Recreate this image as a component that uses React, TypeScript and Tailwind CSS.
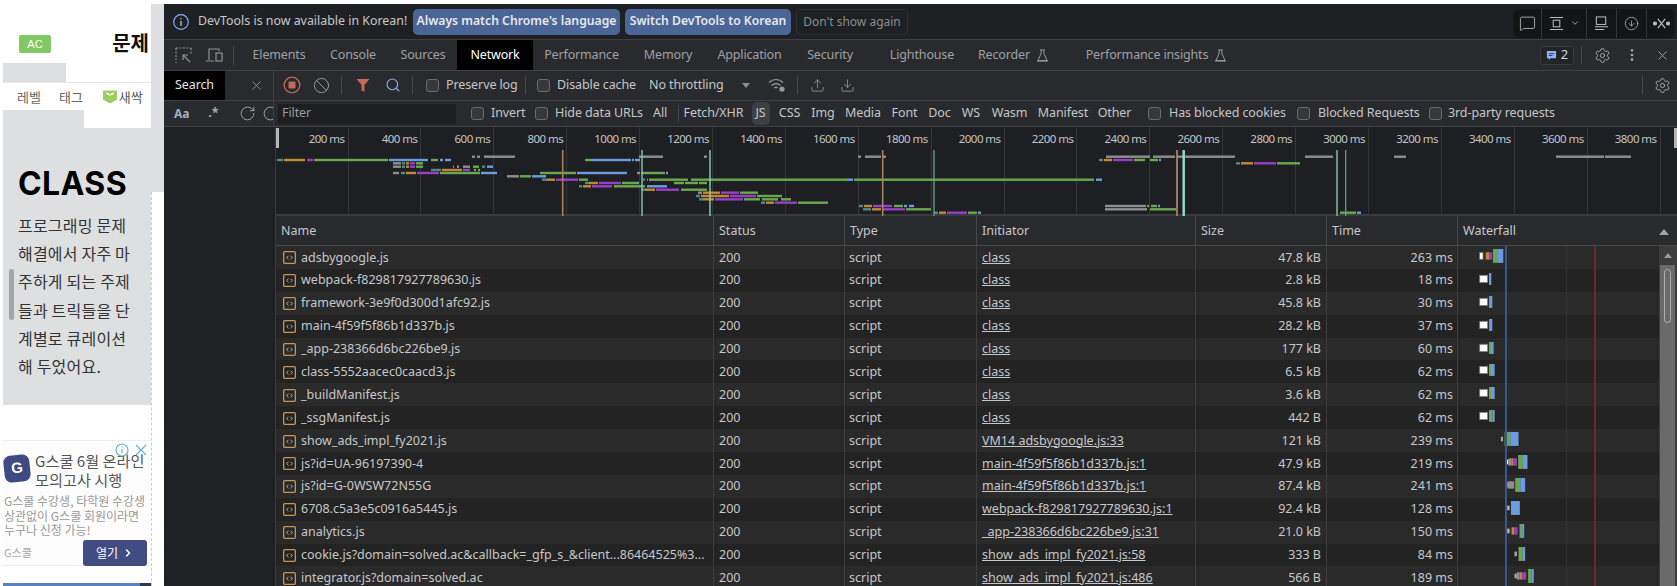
import {
  ChevronDown,
  ChevronRight,
  CircleArrowDown,
  Ban,
  Download,
  EllipsisVertical,
  MessageSquare,
  RotateCw,
  Search,
  Settings,
  Upload,
  X,
} from "lucide-react";

const ui = "font-['Noto_Sans','Noto_Sans_CJK_KR',sans-serif]";

type Seg = [number, number, string];

const c = {
  t: "#4f8c84",
  o: "#c08a35",
  p: "#9a3fc4",
  g: "#69a84f",
  b: "#6c9be0",
  a: "#8f8f8f",
};

// overview bars, [y, [x1, x2, colour]...] in page px
const overview: [number, Seg[]][] = [
  [155.7, [[472, 475, c.a], [477, 480, c.a], [484, 515, c.a], [639, 663, c.a], [704, 707, c.a], [858, 861, c.a], [865, 881, c.a], [883, 886, c.a], [1106, 1150, c.a], [1153, 1175, c.a], [1177, 1235, c.a], [1305, 1333, c.a], [1394, 1406, c.a], [1556, 1604, c.a], [1605, 1631, c.a]]],
  [159, [[277, 283, c.t], [284, 305, c.o], [307, 313, c.p], [314, 388, c.g], [389, 428, c.b], [431, 438, c.g], [440, 443, c.b], [445, 451, c.b], [585, 592, c.g], [592, 631, c.b], [632, 634, c.b], [635, 640, c.b], [1099, 1103, c.t], [1104, 1112, c.o], [1113, 1133, c.p], [1134, 1145, c.g], [1150, 1158, c.g], [1159, 1161, c.b]]],
  [162.3, [[393, 401, c.a], [402, 405, c.t], [406, 409, c.o], [410, 415, c.p], [416, 423, c.g], [1236, 1240, c.t], [1241, 1253, c.o], [1254, 1276, c.p], [1277, 1300, c.g]]],
  [165.7, [[393, 401, c.a], [402, 405, c.t], [406, 409, c.o], [410, 415, c.p], [416, 423, c.g], [453, 454, c.a], [457, 459, c.a], [463, 470, c.a], [473, 479, c.g], [482, 485, c.t], [487, 493, c.b]]],
  [169, [[431, 441, c.t], [442, 462, c.o], [463, 470, c.p], [474, 476, c.g], [478, 480, c.g]]],
  [172, [[393, 399, c.a], [401, 405, c.t], [406, 416, c.o], [417, 439, c.p], [440, 480, c.g], [481, 497, c.b], [540, 576, c.g], [577, 627, c.b], [637, 640, c.a], [641, 665, c.g], [666, 668, c.b]]],
  [175.3, [[507, 519, c.a], [520, 531, c.g], [532, 546, c.b]]],
  [178.7, [[542, 547, c.t], [547, 555, c.o], [556, 578, c.p], [579, 588, c.g], [643, 645, c.t], [647, 648, c.g], [649, 688, c.g], [691, 847, c.g], [847, 853, c.b], [854, 1094, c.g], [1096, 1102, c.b]]],
  [182, [[585, 589, c.t], [589, 598, c.o], [599, 621, c.p], [622, 637, c.g], [637, 639, c.b], [674, 684, c.g], [685, 698, c.g], [699, 707, c.g]]],
  [185.3, [[579, 582, c.t], [583, 591, c.o], [592, 612, c.p], [614, 645, c.g], [647, 667, c.b]]],
  [188.7, [[641, 645, c.t], [645, 655, c.o], [656, 679, c.p], [681, 707, c.g]]],
  [191.7, [[698, 702, c.a], [703, 720, c.o], [721, 739, c.p], [740, 758, c.g]]],
  [195, [[696, 700, c.t], [701, 729, c.o], [730, 756, c.p], [757, 782, c.g]]],
  [198.3, [[699, 703, c.t], [703, 714, c.o], [715, 743, c.p], [744, 760, c.g], [762, 778, c.g], [781, 791, c.g]]],
  [201.7, [[761, 765, c.t], [766, 774, c.o], [775, 797, c.p], [798, 828, c.g]]],
  [205, [[859, 863, c.t], [864, 872, c.o], [873, 892, c.p], [894, 903, c.g], [904, 907, c.b], [909, 914, c.b], [1105, 1146, c.a], [1147, 1149, c.g], [1151, 1157, c.g], [1158, 1160, c.b]]],
  [208.3, [[863, 871, c.t], [872, 881, c.o], [882, 905, c.p], [906, 931, c.g], [1105, 1147, c.a], [1150, 1176, c.g]]],
  [211.7, [[934, 938, c.t], [939, 946, c.o], [947, 967, c.p], [968, 977, c.g], [978, 981, c.b], [1340, 1356, c.g], [1357, 1361, c.b]]],
];

const markers: [number, string, number][] = [
  [562.7, "#a9805f", 1.6],
  [642, "#8cc7b4", 1.4],
  [710, "#8fd0bd", 1.4],
  [882.7, "#a9805f", 1.6],
  [934, "#6fa89a", 1.2],
  [1177, "#a9805f", 1.8],
  [1183.7, "#97dccb", 2.4],
  [1337, "#6f9f90", 1.8],
  [1345.7, "#6f9f90", 1.2],
];

const ticks = Array.from({ length: 19 }, (_, i) => `${(i + 1) * 200} ms`);

type Bar = [number, number, string, number];
const W = "#ffffff";
const cachedBars = (green: number, blue: number): Bar[] => [
  [838, 862, W, 22],
  [866, green, c.g, 36],
  [green, blue, c.b, 36],
];

const rows: {
  name: string;
  initiator: string;
  size: string;
  time: string;
  bars: Bar[];
}[] = [
  { name: "adsbygoogle.js", initiator: "class", size: "47.8 kB", time: "263 ms", bars: [[838, 848, W, 20], [856, 866, c.o, 22], [866, 876, c.p, 22], [878, 893, c.g, 42], [893, 909, c.b, 42]] },
  { name: "webpack-f829817927789630.js", initiator: "class", size: "2.8 kB", time: "18 ms", bars: cachedBars(866, 873) },
  { name: "framework-3e9f0d300d1afc92.js", initiator: "class", size: "45.8 kB", time: "30 ms", bars: cachedBars(869, 876) },
  { name: "main-4f59f5f86b1d337b.js", initiator: "class", size: "28.2 kB", time: "37 ms", bars: cachedBars(869, 876) },
  { name: "_app-238366d6bc226be9.js", initiator: "class", size: "177 kB", time: "60 ms", bars: cachedBars(872, 880) },
  { name: "class-5552aacec0caacd3.js", initiator: "class", size: "6.5 kB", time: "62 ms", bars: cachedBars(872, 883) },
  { name: "_buildManifest.js", initiator: "class", size: "3.6 kB", time: "62 ms", bars: cachedBars(872, 883) },
  { name: "_ssgManifest.js", initiator: "class", size: "442 B", time: "62 ms", bars: cachedBars(876, 883) },
  { name: "show_ads_impl_fy2021.js", initiator: "VM14 adsbygoogle.js:33", size: "121 kB", time: "239 ms", bars: [[902, 908, "#aaaaaa", 14], [913, 930, c.g, 42], [930, 955, c.b, 42]] },
  { name: "js?id=UA-96197390-4", initiator: "main-4f59f5f86b1d337b.js:1", size: "47.9 kB", time: "219 ms", bars: [[918, 925, W, 14], [925, 933, c.a, 22], [933, 940, c.o, 22], [940, 950, c.p, 22], [954, 968, c.g, 42], [968, 982, c.b, 42]] },
  { name: "js?id=G-0WSW72N55G", initiator: "main-4f59f5f86b1d337b.js:1", size: "87.4 kB", time: "241 ms", bars: [[918, 922, W, 14], [922, 942, c.a, 22], [945, 960, c.g, 42], [960, 975, c.b, 42]] },
  { name: "6708.c5a3e5c0916a5445.js", initiator: "webpack-f829817927789630.js:1", size: "92.4 kB", time: "128 ms", bars: [[921, 928, "#bbbbbb", 14], [932, 959, c.b, 42]] },
  { name: "analytics.js", initiator: "_app-238366d6bc226be9.js:31", size: "21.0 kB", time: "150 ms", bars: [[921, 928, "#bbbbbb", 14], [934, 942, c.o, 22], [942, 952, c.p, 22], [958, 966, c.g, 42], [966, 972, c.b, 42]] },
  { name: "cookie.js?domain=solved.ac&callback=_gfp_s_&client...86464525%3...", initiator: "show_ads_impl_fy2021.js:58", size: "333 B", time: "84 ms", bars: [[943, 950, "#aaaaaa", 14], [955, 968, c.g, 42], [968, 975, c.b, 42]] },
  { name: "integrator.js?domain=solved.ac", initiator: "show_ads_impl_fy2021.js:486", size: "566 B", time: "189 ms", bars: [[943, 950, "#aaaaaa", 14], [950, 958, c.a, 22], [958, 966, c.o, 22], [966, 978, c.p, 22], [984, 994, c.g, 42], [994, 1001, c.b, 42]] },
];

function Box() {
  return <span className="block w-[13px] h-[13px] shrink-0 rounded-[3px] border border-[#6a6c6f] bg-[#37383b]" />;
}

function Check({ label, w, gap = 7 }: { label: string; w: number; gap?: number }) {
  return (
    <span className="flex items-center shrink-0" style={{ width: w }}>
      <Box />
      <span className="whitespace-nowrap" style={{ marginLeft: gap }}>{label}</span>
    </span>
  );
}

function Flask({ className }: { className: string }) {
  return (
    <svg viewBox="0 0 14 14" className={className} fill="none" stroke="currentColor" strokeWidth="1">
      <path d="M4.5 1h5M5.5 1v4L2 12.5h10L8.5 5V1M1 13h12" />
    </svg>
  );
}

function FileIcon() {
  return (
    <svg viewBox="0 0 12 12" className="w-[13px] h-[13px] shrink-0 ml-[7px] mr-[5px]" fill="none">
      <rect x="0.6" y="0.6" width="10.8" height="10.8" rx="1" stroke="#c4965a" strokeWidth="1.2" />
      <path d="M5 4.4 3.4 6 5 7.6M7 4.4 8.6 6 7 7.6" stroke="#c4b59a" strokeWidth="0.9" />
    </svg>
  );
}

function PageColumn() {
  return (
    <div className="relative w-[164px] shrink-0 flex pl-[3px] bg-white font-['Noto_Sans_CJK_KR','Noto_Sans',sans-serif]">
      <div className="w-[148px] flex flex-col">
        <div className="h-[59px] flex pl-[16px] pt-[31px] justify-between pr-[2px]">
          <span className="w-[32px] h-[18px] rounded-[2px] bg-[#82c965] text-white text-[11px] leading-[18px] text-center font-['Liberation_Sans']">AC</span>
          <span className="text-[#111] text-[20px] font-bold leading-[20px] -mt-[2px]">문제</span>
        </div>
        <div className="h-[19px] w-[63px] bg-[#dddfe1]" />
        <div className="h-[28px] border-t border-[#e8e8e8] flex items-center text-[13px] text-[#666] pl-[14px]">
          <span>레벨</span>
          <span className="ml-[18px]">태그</span>
          <svg viewBox="0 0 14 14" className="w-[14px] h-[15px] ml-[20px]">
            <path d="M0 1h14v9l-7 4-7-4z" fill="#9ccf5f" />
            <path d="M7 10V6C7 4 5 3 3 3c0 2 2 3 4 3 0-2 2-3 4-3 0 2-2 3-4 3" fill="#fff" />
          </svg>
          <span className="ml-[2px] text-[#555]">새싹</span>
        </div>
        <div className="h-[18px] w-[81px] bg-[#dddfe1]" />
        <div className="h-[277px] bg-[#dddfe1] pl-[15px] pt-[40px]">
          <div className="text-[32px] leading-[32px] font-bold text-black font-['Inter'] tracking-[0.4px]">CLASS</div>
          <p className="mt-[11px] text-[16px] leading-[28.2px] text-[#333] tracking-[0.2px] whitespace-nowrap">
            프로그래밍 문제<br />해결에서 자주 마<br />주하게 되는 주제<br />들과 트릭들을 단<br />계별로 큐레이션<br />해 두었어요.
          </p>
        </div>
        <div className="h-[35px]" />
        <div className="relative h-[126px] border-y border-[#eeeeee] bg-[#fdfdfd] pl-[1px]">
          <div className="flex pt-[10px]">
            <span className="w-[26px] h-[27px] mt-[4px] rounded-[7px] -rotate-6 bg-[#3f4a82] text-white text-[15px] font-bold flex items-center justify-center font-['Liberation_Sans']">G</span>
            <span className="ml-[5px] text-[15.2px] leading-[19px] text-[#555] whitespace-nowrap">G스쿨 6월 온라인<br />모의고사 시행</span>
          </div>
          <p className="mt-[5px] text-[12px] leading-[14.5px] text-[#999] whitespace-nowrap">
            G스쿨 수강생, 타학원 수강생<br />상관없이 G스쿨 회원이라면<br />누구나 신청 가능!
          </p>
          <div className="flex items-center justify-between pr-[4px] mt-[2px]">
            <span className="text-[11px] text-[#aaa]">G스쿨</span>
            <span className="w-[64px] h-[26px] rounded-[3px] bg-[#424b82] text-white text-[12px] flex items-center justify-center gap-[4px]">
              열기 <ChevronRight className="w-[12px] h-[12px]" strokeWidth={3} />
            </span>
          </div>
          <svg viewBox="0 0 34 14" className="absolute right-[2px] top-[2px] w-[34px] h-[14px]" fill="none" stroke="#6cb2d8" strokeWidth="1.2">
            <circle cx="7" cy="7" r="6" />
            <path d="M7 6v4M7 3.5v1" />
            <path d="M21 2l10 10M31 2 21 12" />
          </svg>
        </div>
        <div className="mt-[17px] h-[3px] flex">
          <div className="w-[137px] bg-[#5b80c4]" />
          <div className="flex-1 bg-[#2f3a4a]" />
        </div>
      </div>
      <div className="w-[13px] flex flex-col">
        <div className="h-[188px] bg-[#dddfe1]" />
        <div className="flex-1 border-l border-dashed border-[#cccccc] bg-white" />
      </div>
      <div className="absolute left-[9px] top-[265px] w-[5px] h-[51px] rounded-[3px] bg-[#a6a6a6]" />
    </div>
  );
}

function InfoBar() {
  return (
    <div className="h-[35px] flex items-center bg-[#1f2023] pl-[9px] text-[12.4px] text-[#c7c9cc]">
      <svg viewBox="0 0 14 14" className="w-[16px] h-[16px]" fill="none" stroke="#8ab4f8" strokeWidth="1">
        <circle cx="7" cy="7" r="6.4" />
        <path d="M7 6v4.5M7 3.5v1.2" stroke="#d0d4da" />
      </svg>
      <span className="ml-[9px] w-[215px] whitespace-nowrap">DevTools is now available in Korean!</span>
      <span className="w-[207px] h-[26px] rounded-[5px] bg-[#4a6596] text-[12.2px] text-[#e6e9ee] font-semibold flex items-center justify-center whitespace-nowrap">Always match Chrome's language</span>
      <span className="ml-[5px] w-[166px] h-[26px] rounded-[5px] bg-[#4a6596] text-[12.2px] text-[#e6e9ee] font-semibold flex items-center justify-center whitespace-nowrap">Switch DevTools to Korean</span>
      <span className="ml-[5px] w-[112px] h-[26px] rounded-[5px] border border-[#2f3033] text-[12px] text-[#8a8d91] flex items-center justify-center whitespace-nowrap">Don't show again</span>
      <div className="ml-auto mr-[2px] mt-[3px] w-[162px] h-[29px] rounded-[6px] bg-[#141517] flex items-center text-[#b9bbbe]">
        <span className="w-[29px] h-full flex items-center justify-center border-r border-[#34353a]">
          <MessageSquare className="w-[17px] h-[17px]" strokeWidth={1.2} />
        </span>
        <span className="w-[45px] h-full flex items-center justify-center gap-[6px] border-r border-[#34353a]">
          <svg viewBox="0 0 16 16" className="w-[15px] h-[15px]" fill="none" stroke="currentColor" strokeWidth="1.1">
            <path d="M1 1.5h14M1 14.5h14" />
            <rect x="4.5" y="4.5" width="7" height="7" />
          </svg>
          <ChevronDown className="w-[10px] h-[10px]" />
        </span>
        <span className="w-[30px] h-full flex items-center justify-center border-r border-[#34353a]">
          <svg viewBox="0 0 16 16" className="w-[15px] h-[15px]" fill="none" stroke="currentColor" strokeWidth="1.1">
            <rect x="2.5" y="1" width="10" height="8" />
            <path d="M1 11.5h14M1 14.5h10" />
          </svg>
        </span>
        <span className="w-[30px] h-full flex items-center justify-center border-r border-[#34353a]">
          <CircleArrowDown className="w-[15px] h-[15px]" strokeWidth={1.2} />
        </span>
        <span className="flex-1 flex items-center justify-center">
          <svg viewBox="0 0 18 14" className="w-[17px] h-[13px]" fill="none" stroke="currentColor" strokeWidth="1.3">
            <circle cx="2" cy="7" r="1.6" fill="currentColor" />
            <circle cx="16" cy="7" r="1.6" fill="currentColor" />
            <path d="M5 2l8 10M13 2 5 12" />
          </svg>
        </span>
      </div>
    </div>
  );
}

const tabs: [string, number][] = [
  ["Elements", 76],
  ["Console", 72],
  ["Sources", 68],
  ["Network", 76],
  ["Performance", 97],
  ["Memory", 76],
  ["Application", 87],
  ["Security", 74],
  ["Lighthouse", 110],
];

function TabBar() {
  return (
    <div className="h-[31px] flex items-center bg-[#292a2d] border-t border-[#3f4043] text-[12.5px] tracking-[-0.15px] text-[#9ea1a5]">
      <svg viewBox="0 0 17 17" className="w-[17px] h-[17px] ml-[11px]" fill="none" stroke="#8e9195" strokeWidth="1.2">
        <path d="M1 1h15M1 1v12M16 1v6M1 15v1" strokeDasharray="2 1.5" />
        <path d="M15 15 8 8M8 13V8h5" />
      </svg>
      <svg viewBox="0 0 18 16" className="w-[18px] h-[16px] ml-[13px]" fill="none" stroke="#8e9195" strokeWidth="1.2">
        <path d="M4 13V2h10v2M1 14h8" />
        <rect x="11" y="6" width="6" height="8" />
      </svg>
      <span className="w-px h-[19px] bg-[#46474a] ml-[10px] mr-[7px]" />
      {tabs.map(([label, w]) => (
        <span
          key={label}
          style={{ width: w }}
          className={
            label === "Network"
              ? "h-full flex items-center justify-center bg-black text-white"
              : "h-full flex items-center justify-center whitespace-nowrap"
          }
        >
          {label}
        </span>
      ))}
      <span className="w-[73px] h-full flex items-center justify-center gap-[6px]">
        Recorder <Flask className="w-[13px] h-[13px]" />
      </span>
      <span className="w-[213px] h-full flex items-center justify-center gap-[6px] whitespace-nowrap">
        Performance insights <Flask className="w-[13px] h-[13px]" />
      </span>
      <span className="ml-[277px] w-[34px] h-[19px] rounded-[3px] border border-[#3b3c40] bg-[#232427] flex items-center justify-center gap-[4px] text-[#d5d6d8] text-[13px]">
        <svg viewBox="0 0 12 12" className="w-[11px] h-[11px]">
          <path d="M1 1h10v8H5l-2 2V9H1z" fill="#8ab4f8" />
          <path d="M3 4h6M3 6h4" stroke="#2a3a55" />
        </svg>
        2
      </span>
      <span className="w-px h-[18px] bg-[#46474a] ml-[7px]" />
      <Settings className="w-[17px] h-[17px] ml-[12px] text-[#a5a7aa]" strokeWidth={1.4} />
      <EllipsisVertical className="w-[16px] h-[16px] ml-[13px] text-[#a5a7aa]" strokeWidth={2} />
      <X className="w-[15px] h-[15px] ml-[15px] text-[#a5a7aa]" strokeWidth={1.4} />
    </div>
  );
}

function ControlsRow() {
  return (
    <div className="h-[30px] flex bg-[#292a2d] border-t border-[#3f4043] text-[12.5px] tracking-[-0.1px] text-[#c4c6c9]">
      <div className="w-[110px] flex items-center border-r border-[#3f4043]">
        <span className="w-[61px] h-full bg-black text-[#e4e4e4] flex items-center pl-[11px] pb-[1px]">Search</span>
        <X className="w-[15px] h-[15px] ml-[24px] text-[#9a9c9f]" strokeWidth={1.3} />
      </div>
      <div className="flex-1 flex items-center pb-[1px]">
        <svg viewBox="0 0 18 18" className="w-[18px] h-[18px] ml-[9px]" fill="none">
          <circle cx="9" cy="9" r="7.8" stroke="#c0695c" strokeWidth="1.3" />
          <rect x="5.5" y="5.5" width="7" height="7" rx="1" fill="#c0695c" />
        </svg>
        <Ban className="w-[17px] h-[17px] ml-[12px] text-[#a0a2a5]" strokeWidth={1.3} />
        <span className="w-px h-[18px] bg-[#46474a] ml-[11px]" />
        <svg viewBox="0 0 14 14" className="w-[14px] h-[14px] ml-[14px]">
          <path d="M0.5 1h13L8.5 7v6.5L5.5 13V7z" fill="#c0695c" />
        </svg>
        <Search className="w-[16px] h-[16px] ml-[15px] text-[#8ab4f8]" strokeWidth={1.6} />
        <span className="w-px h-[18px] bg-[#46474a] ml-[11px]" />
        <span className="ml-[13px] flex items-center"><Check label="Preserve log" w={94} /></span>
        <span className="w-px h-[18px] bg-[#46474a] ml-[5px]" />
        <span className="ml-[11px] flex items-center"><Check label="Disable cache" w={112} /></span>
        <span className="whitespace-nowrap w-[90px]">No throttling</span>
        <span className="w-0 h-0 border-x-[4px] border-x-transparent border-t-[5px] border-t-[#8c8e91] ml-[3px]" />
        <svg viewBox="0 0 18 16" className="w-[18px] h-[16px] ml-[18px]" fill="none" stroke="#9a9c9f" strokeWidth="1.2">
          <path d="M1 5.5c4-4 10-4 14 0M3.5 8.5c3-2.6 6-2.6 9 0M6.5 11c1-1 2-1 3 0" />
          <circle cx="14" cy="12" r="2" fill="#9a9c9f" />
        </svg>
        <span className="w-px h-[18px] bg-[#46474a] ml-[11px]" />
        <Upload className="w-[15px] h-[15px] ml-[12px] text-[#9a9c9f]" strokeWidth={1.3} />
        <Download className="w-[15px] h-[15px] ml-[15px] text-[#9a9c9f]" strokeWidth={1.3} />
        <span className="w-px h-[18px] bg-[#46474a] ml-auto" />
        <Settings className="w-[17px] h-[17px] mx-[6px] ml-[11px] text-[#a5a7aa]" strokeWidth={1.4} />
      </div>
    </div>
  );
}

const filterTypes: [string, number][] = [
  ["Fetch/XHR", 69],
  ["JS", 25],
  ["CSS", 33],
  ["Img", 34],
  ["Media", 46],
  ["Font", 37],
  ["Doc", 33],
  ["WS", 30],
  ["Wasm", 47],
  ["Manifest", 60],
  ["Other", 43],
];

function FilterRow() {
  return (
    <div className="h-[27px] flex bg-[#292a2d] border-t border-[#3f4043] border-b text-[12.5px] tracking-[-0.1px] text-[#c4c6c9]">
      <div className="w-[110px] flex items-center overflow-hidden border-r border-[#3f4043] text-[#a5a7aa]">
        <span className="ml-[10px] font-bold text-[12px] text-[#9fb0c4]">Aa</span>
        <span className="ml-[19px] font-bold">.*</span>
        <span className="w-px h-[18px] bg-[#1c1d1f] ml-[8px]" />
        <RotateCw className="w-[17px] h-[17px] ml-[13px] shrink-0" strokeWidth={1.3} />
        <RotateCw className="w-[17px] h-[17px] ml-[6px] shrink-0" strokeWidth={1.3} />
      </div>
      <div className="flex-1 flex items-center">
        <span className="ml-[4px] w-[178px] h-[20px] bg-[#1d1e20] text-[#9a9c9f] flex items-center pl-[4px]">Filter</span>
        <span className="ml-[15px]"><Check label="Invert" w={64} /></span>
        <Check label="Hide data URLs" w={118} />
        <span className="whitespace-nowrap w-[25px]">All</span>
        <span className="w-px h-[17px] bg-[#46474a]" />
        {filterTypes.map(([label, w]) => (
          <span
            key={label}
            style={{ width: w }}
            className="h-full flex items-center justify-center"
          >
            <span className={label === "JS" ? "w-[18px] h-[23px] rounded-[5px] bg-[#3f4043] flex items-center justify-center" : ""}>
              {label}
            </span>
          </span>
        ))}
        <span className="ml-[12px]"><Check label="Has blocked cookies" w={149} gap={8} /></span>
        <Check label="Blocked Requests" w={132} gap={8} />
        <Check label="3rd-party requests" w={126} gap={6} />
      </div>
    </div>
  );
}

function Overview() {
  return (
    <div className="relative h-[89px] flex bg-[#1e1f22] border-b-2 border-[#3a3b3e]">
      {ticks.map((t, i) => (
        <div
          key={t}
          className={
            i === 0
              ? "w-[72.5px] shrink-0 border-r border-[#35363a] text-right pr-[3px] pt-[4px] text-[11.5px] tracking-[-0.55px] leading-[16px] text-[#c4c6c9] whitespace-nowrap"
              : "w-[72.9px] shrink-0 border-r border-[#35363a] text-right pr-[3px] pt-[4px] text-[11.5px] tracking-[-0.55px] leading-[16px] text-[#c4c6c9] whitespace-nowrap"
          }
        >
          {t}
        </div>
      ))}
      <svg viewBox="276 126 1401 89" className="absolute left-0 top-0 w-[1401px] h-[89px]">
        {overview.map(([y, segs]) =>
          segs.map(([x1, x2, col]) => (
            <rect key={`${y}-${x1}`} x={x1} y={y - 1.2} width={x2 - x1} height={2.4} fill={col} />
          )),
        )}
        {markers.map(([x, col, w]) => (
          <rect key={x} x={x - w / 2} y={149} width={w} height={66} fill={col} />
        ))}
      </svg>
      <div className="absolute left-0 top-[1px] w-[3px] h-[20px] bg-[#b5b5b5]" />
      <div className="absolute right-0 top-[1px] w-[3px] h-[20px] bg-[#b5b5b5]" />
    </div>
  );
}

const columns: [string, number][] = [
  ["Name", 438],
  ["Status", 131],
  ["Type", 132],
  ["Initiator", 219],
  ["Size", 131],
  ["Time", 131],
];

function WaterfallBars({ bars }: { bars: Bar[] }) {
  return (
    <svg viewBox="0 0 201 23" className="block w-[201px] h-[22.9px]">
      {bars.map(([x1, x2, col, h]) => (
        <rect
          key={x1}
          x={x1 / 3 - 258}
          y={10 - h / 6}
          width={(x2 - x1) / 3}
          height={h / 3}
          fill={col}
          stroke={col === W ? "#777" : "none"}
          strokeWidth={0.8}
        />
      ))}
    </svg>
  );
}

function Table() {
  return (
    <div className="flex-1 flex flex-col min-h-0 text-[12.5px] text-[#c7c8ca]">
      <div className="h-[30px] shrink-0 flex bg-[#282a2e] border-b border-[#47484b]">
        {columns.map(([label, w]) => (
          <div key={label} style={{ width: w }} className="shrink-0 flex items-center pl-[5px] pt-[2px] border-r border-[#47484b]">
            {label}
          </div>
        ))}
        <div className="flex-1 flex items-center justify-between pl-[5px] pt-[2px] pr-[8px]">
          Waterfall
          <span className="w-0 h-0 border-x-[5px] border-x-transparent border-b-[6px] border-b-[#a0a2a5]" />
        </div>
      </div>
      <div className="flex-1 flex min-h-0 overflow-hidden">
        <div className="relative w-[1383px] shrink-0">
          {rows.map((r, i) => (
            <div key={r.name} className={i % 2 === 0 ? "h-[22.9px] flex bg-[#2a2a2a]" : "h-[22.9px] flex bg-[#232323]"}>
              <div className="w-[438px] shrink-0 flex items-center pt-[1px] border-r border-[#3e3e3e] overflow-hidden whitespace-nowrap">
                <FileIcon />
                {r.name}
              </div>
              <div className="w-[131px] shrink-0 flex items-center pt-[1px] pl-[5px] border-r border-[#3e3e3e]">200</div>
              <div className="w-[132px] shrink-0 flex items-center pt-[1px] pl-[4px] border-r border-[#3e3e3e]">script</div>
              <div className="w-[219px] shrink-0 flex items-center pt-[1px] pl-[5px] border-r border-[#3e3e3e] underline whitespace-nowrap">{r.initiator}</div>
              <div className="w-[131px] shrink-0 flex items-center pt-[1px] justify-end pr-[5px] border-r border-[#3e3e3e]">{r.size}</div>
              <div className="w-[131px] shrink-0 flex items-center pt-[1px] justify-end pr-[4px] border-r border-[#3e3e3e]">{r.time}</div>
              <div className="flex-1"><WaterfallBars bars={r.bars} /></div>
            </div>
          ))}
          <div className="absolute top-0 bottom-0 left-[1290px] w-px bg-[#353535]" />
          <div className="absolute top-0 bottom-0 left-[1228.5px] w-[2px] bg-[#3b5590]" />
          <div className="absolute top-0 bottom-0 left-[1317.5px] w-[2px] bg-[#692b29]" />
        </div>
        <div className="flex-1 flex flex-col bg-[#3c3c3c]">
          <div className="h-[19px] flex items-center justify-center">
            <span className="w-0 h-0 border-x-[4px] border-x-transparent border-b-[5px] border-b-[#9b9b9b]" />
          </div>
          <div className="flex-1 ml-[1px] mr-[2px] bg-[#6a6a6a] pt-[4px] flex justify-center">
            <div className="w-[7px] h-[54px] rounded-[4px] border border-[#b0b0b0]" />
          </div>
        </div>
      </div>
    </div>
  );
}

export default function App() {
  return (
    <div className={`w-[1677px] h-[586px] overflow-hidden bg-white pt-[4px] flex ${ui}`}>
      <PageColumn />
      <div className="flex-1 min-w-0 flex flex-col bg-[#202124]">
        <InfoBar />
        <TabBar />
        <ControlsRow />
        <FilterRow />
        <div className="flex-1 min-h-0 flex">
          <div className="w-[112px] shrink-0 border-r border-[#3a3b3e] bg-[#202124]" />
          <div className="flex-1 min-w-0 flex flex-col">
            <Overview />
            <Table />
          </div>
        </div>
      </div>
    </div>
  );
}
